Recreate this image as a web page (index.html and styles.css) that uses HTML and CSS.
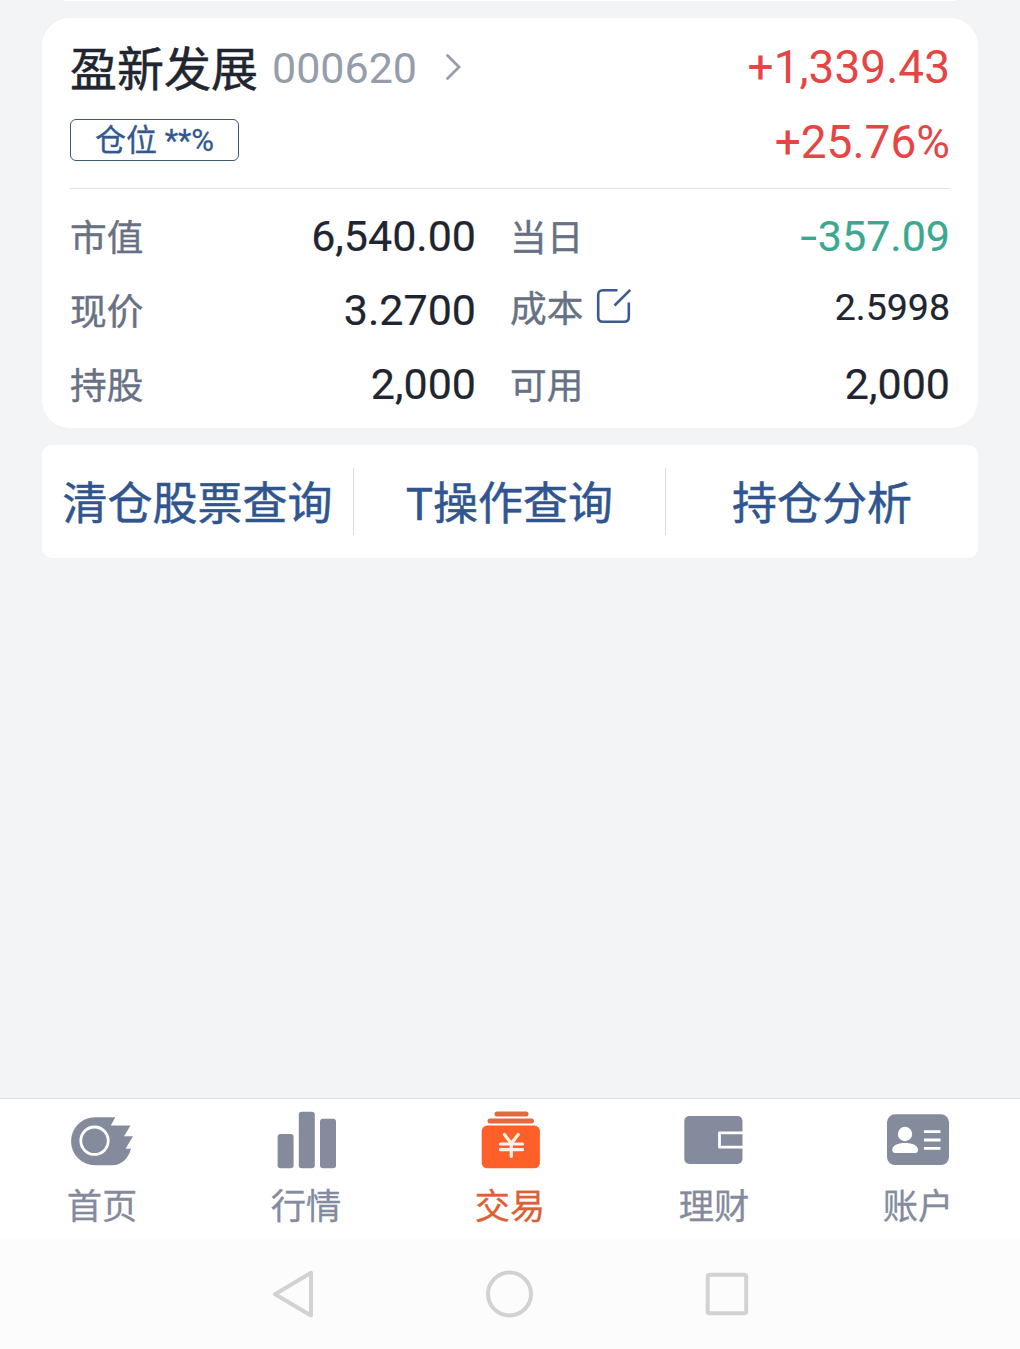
FILE: index.html
```html
<!DOCTYPE html>
<html lang="zh-CN">
<head>
<meta charset="utf-8">
<title>持仓</title>
<link rel="stylesheet" href="styles.css">
</head>
<body>
<div class="screen">
  <main class="content">
    <div class="card-tail"></div>
    <section class="card">
      <header class="card-head">
        <div class="stock">
          <span class="stock-name">盈新发展</span>
          <span class="stock-code">000620</span>
          <svg class="chevron" width="18" height="28" viewBox="0 0 18 28"><path d="M2.5 2.5 14 14 2.5 25.5"/></svg>
        </div>
        <span class="gain">+1,339.43</span>
      </header>
      <div class="card-sub">
        <span class="tag">仓位 **%</span>
        <span class="gain">+25.76%</span>
      </div>
      <div class="stats">
        <div class="stat"><span class="label">市值</span><span class="value">6,540.00</span></div>
        <div class="stat"><span class="label">当日</span><span class="value value-down"><span class="minus">-</span>357.09</span></div>
        <div class="stat"><span class="label">现价</span><span class="value">3.2700</span></div>
        <div class="stat stat-cost">
          <span class="label">成本
            <svg class="edit" width="36" height="36" viewBox="0 0 36 36"><path d="M21.5 2.2H7Q2.2 2.2 2.2 7V29Q2.2 33.8 7 33.8H28Q32.8 33.8 32.8 29V14.5"/><path d="M18.5 17.5 34.3 1.8"/></svg>
          </span>
          <span class="value value-small">2.5998</span>
        </div>
        <div class="stat"><span class="label">持股</span><span class="value">2,000</span></div>
        <div class="stat"><span class="label">可用</span><span class="value">2,000</span></div>
      </div>
    </section>
    <nav class="actions">
      <a class="action">清仓股票查询</a>
      <a class="action">T操作查询</a>
      <a class="action">持仓分析</a>
    </nav>
  </main>
  <nav class="tabs">
    <a class="tab">
      <svg width="64" height="60" viewBox="0 0 64 60">
        <path fill="currentColor" d="M25 7.3H45.3L40.8 15.500H60.500L54 26.300H63L55.500 38.700H61C58.500 48 52 55.200 42 55.200H25A23.900 23.900 0 0 1 25 7.300Z"/>
        <circle cx="24.500" cy="30.700" r="13.700" fill="none" stroke="#fff" stroke-width="2.800"/>
      </svg>
      <span>首页</span>
    </a>
    <a class="tab">
      <svg width="64" height="60" viewBox="0 0 64 60" fill="currentColor">
        <rect x="3.6" y="24" width="16" height="34.3" rx="3"/>
        <rect x="24.8" y="1.8" width="16" height="56.5" rx="3"/>
        <rect x="46" y="8.8" width="16" height="49.5" rx="3"/>
      </svg>
      <span>行情</span>
    </a>
    <a class="tab tab-active">
      <svg width="64" height="60" viewBox="0 0 64 60">
        <g fill="#e4693f"><rect x="16.500" y="1.500" width="34" height="5" rx="2.500"/><rect x="9.500" y="8.500" width="46.500" height="5" rx="2.500"/></g>
        <rect x="3.7" y="15.6" width="58.2" height="42.7" rx="5.5" fill="#ff5f28"/>
        <path d="M26.5 24.5 33.3 33.5 40.2 24.5M33.3 33.5V46.5M22.5 34H44.5M22.5 39.7H44.5" fill="none" stroke="#fff1e6" stroke-width="3.200" stroke-linecap="round"/>
      </svg>
      <span>交易</span>
    </a>
    <a class="tab">
      <svg width="64" height="60" viewBox="0 0 64 60">
        <rect x="2.3" y="6" width="58.2" height="48" rx="5" fill="currentColor"/>
        <path d="M61 22.8H37.5V37.2H61" fill="none" stroke="#fff" stroke-width="2.8" stroke-linejoin="round"/>
      </svg>
      <span>理财</span>
    </a>
    <a class="tab">
      <svg width="64" height="60" viewBox="0 0 64 60">
        <rect x="1" y="4.3" width="62" height="50.8" rx="8" fill="currentColor"/>
        <g fill="#fff"><circle cx="19" cy="24" r="7.2"/><path d="M6.3 40C6.3 35.5 11.5 33 19 33S32 35.5 32 40Q32 43 29 43H9.300Q6.300 43 6.300 40Z"/></g>
        <path d="M38 21.600H54.500M38 30H54.500M38 38.400H54.500" stroke="#fff" stroke-width="2.800"/>
      </svg>
      <span>账户</span>
    </a>
  </nav>
  <footer class="system-nav">
    <svg width="44" height="50" viewBox="0 0 44 50"><path d="M41 3.800V46.500L5 25.200Z"/></svg>
    <svg width="50" height="50" viewBox="0 0 50 50"><circle cx="25.500" cy="25" r="21.500"/></svg>
    <svg width="46" height="50" viewBox="0 0 46 50"><rect x="3.700" y="5.700" width="38.500" height="38.500" rx="2"/></svg>
  </footer>
</div>
</body>
</html>
```
FILE: styles.css
```css
* {
  box-sizing: border-box;
}

body {
  margin: 0;
  background: #f3f4f6;
  font-family: Roboto, "Noto Sans CJK SC", sans-serif;
  color: #20252f;
}

svg {
  display: block;
  flex: none;
}

.screen {
  display: flex;
  flex-direction: column;
  height: 1349px;
  overflow: hidden;
}

.content {
  flex: 1;
  padding: 0 42px;
}

.card-tail {
  height: 1px;
  margin: 0 22px 17px;
  background: #fff;
}

.card {
  height: 410px;
  padding: 12px 28px 0;
  border-radius: 28px;
  background: #fff;
}

.card-head,
.card-sub,
.stock,
.stat,
.label {
  display: flex;
  align-items: center;
}

.card-head,
.card-sub,
.stat {
  justify-content: space-between;
}

.card-head {
  height: 75px;
}

.card-sub {
  height: 75px;
}

.stock-name {
  padding-top: 4px;
  font-size: 47px;
  line-height: 71px;
  -webkit-text-stroke: 0.5px;
}

.stock-code {
  margin-left: 14px;
  font-size: 43px;
  color: #959dab;
}

.chevron {
  margin-left: 28px;
  margin-bottom: 2px;
  fill: none;
  stroke: #959dab;
  stroke-width: 2.8;
  stroke-linecap: round;
}

.gain {
  padding-bottom: 2px;
  font-size: 46px;
  color: #e54545;
}

.tag {
  width: 169px;
  height: 42px;
  margin-bottom: 5px;
  border: 1px solid #3d5873;
  border-radius: 6px;
  color: #35578f;
  font-size: 31px;
  line-height: 42px;
  text-align: center;
  -webkit-text-stroke: 0.3px;
}

.stats {
  display: grid;
  grid-template-columns: 406px 440px;
  grid-auto-rows: 74px;
  column-gap: 34px;
  margin-top: 8px;
  padding-top: 10px;
  border-top: 1px solid #dfe1e3;
}

.label {
  gap: 13px;
  padding-bottom: 3px;
  font-size: 36.7px;
  color: #687184;
  -webkit-text-stroke: 0.4px;
}

.value {
  font-size: 43px;
  -webkit-text-stroke: 0.2px;
}

.value-down {
  color: #3ba88f;
}

.minus {
  display: inline-block;
  margin-right: 3px;
  transform: scaleX(1.4);
}

.value-small {
  font-size: 37.5px;
}

.stat-cost {
  padding-bottom: 6px;
}

.edit {
  fill: none;
  stroke: #3b5a92;
  stroke-width: 2.6;
}

.actions {
  display: grid;
  grid-template-columns: 311px 312px 313px;
  height: 113px;
  margin-top: 17px;
  padding: 23px 0;
  border-radius: 10px;
  background: #fff;
}

.action {
  display: flex;
  align-items: center;
  justify-content: center;
  padding-top: 7px;
  font-size: 45px;
  line-height: 60px;
  color: #31568f;
  -webkit-text-stroke: 0.5px;
}

.action + .action {
  border-left: 1px solid #dcdfe2;
}

.tabs {
  display: grid;
  grid-template-columns: repeat(5, 1fr);
  height: 141px;
  padding-top: 11px;
  border-top: 1px solid #dadde3;
  background: #fff;
}

.tab {
  display: flex;
  flex-direction: column;
  align-items: center;
  font-size: 35.3px;
  line-height: 74px;
  color: #848b9d;
  -webkit-text-stroke: 0.3px;
}

.tab-active {
  color: #dc6035;
}

.system-nav {
  display: flex;
  justify-content: space-between;
  height: 110px;
  padding: 30px 270px 0;
  background: #fcfcfc;
}

.system-nav svg {
  fill: none;
  stroke: #d2d2d2;
  stroke-width: 4;
  stroke-linejoin: round;
}
```
